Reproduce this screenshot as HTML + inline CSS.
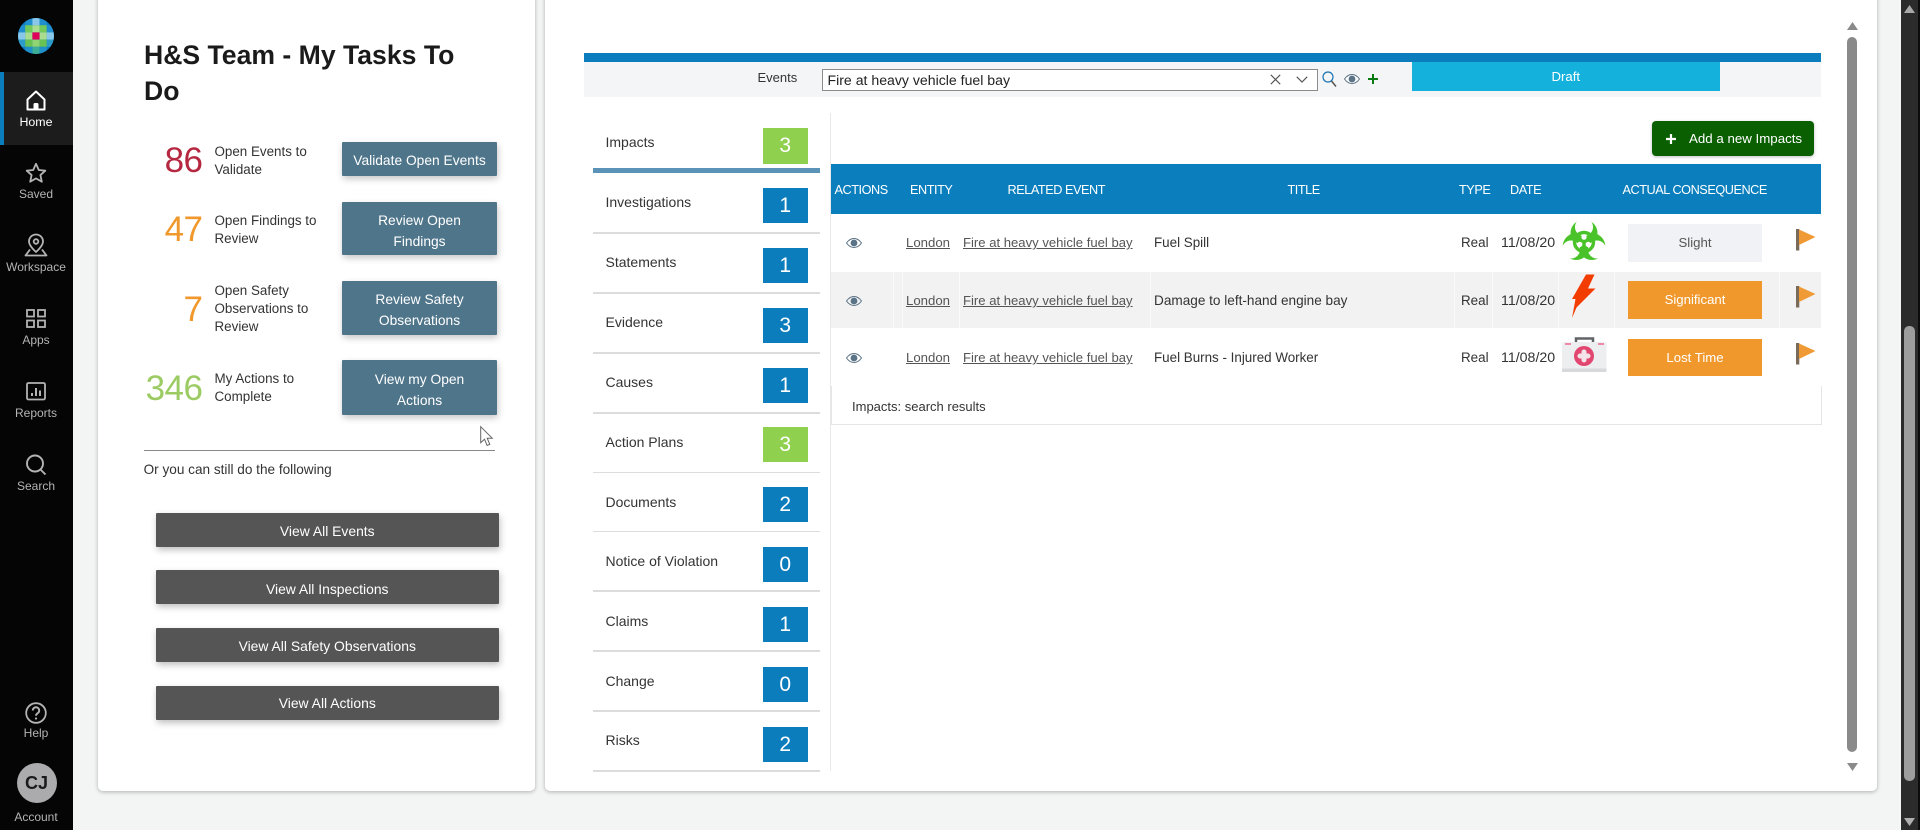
<!DOCTYPE html>
<html><head><meta charset="utf-8"><title>H&amp;S Team</title>
<style>
html,body{margin:0;padding:0}
body{width:1920px;height:830px;overflow:hidden;background:#f3f4f4;position:relative;font-family:"Liberation Sans",sans-serif;color:#2a2a2a}
.a{position:absolute}
.t{position:absolute;white-space:nowrap}
.card{position:absolute;background:#fff;border-radius:0 0 5px 5px;box-shadow:0 1px 4px rgba(0,0,0,.28)}
.nl{position:absolute;left:0;width:72px;text-align:center;font-size:12px;line-height:16px;color:#b4b4b4}
svg{position:absolute;overflow:visible}
.num{position:absolute;left:100px;width:102.5px;text-align:right;font-size:35px;line-height:40px;letter-spacing:-.5px}
.lab{position:absolute;left:214.5px;font-size:13.4px;line-height:18px;color:#333;white-space:nowrap;margin-top:.5px}
.bb{position:absolute;left:342px;width:155px;background:#4f758b;color:#fff;font-size:13.8px;line-height:21px;text-align:center;box-shadow:1px 3px 7px rgba(0,0,0,.22);border-radius:1px}
.gb{position:absolute;left:155.5px;width:343.5px;height:34px;background:#555;color:#fff;font-size:13.9px;line-height:37px;text-align:center;box-shadow:1px 3px 7px rgba(0,0,0,.25);border-radius:1px}
.badge{position:absolute;left:762.5px;width:45.5px;height:35px;background:#0b7dbc;color:#fff;font-size:21px;line-height:35px;text-align:center}
.g{background:#90d04f}
.nv{position:absolute;left:605.5px;font-size:14px;line-height:18px;color:#333;white-space:nowrap;margin-top:-.8px}
.sep{position:absolute;left:593px;width:227px;height:1.5px;background:#dcdcdc}
.th{position:absolute;top:180px;font-size:12.7px;line-height:20px;color:#fff;white-space:nowrap;letter-spacing:-.45px}
.td{position:absolute;font-size:13.4px;line-height:18px;color:#333;white-space:nowrap}
.u{text-decoration:underline;color:#555;font-size:13.2px}
.dt{font-size:14.2px}
.cq{position:absolute;left:1628px;width:134px;height:38px;line-height:38px;text-align:center;font-size:13.2px;color:#fff;background:#f0982c}
.wl{position:absolute;top:272px;width:1px;height:56px;background:#fafafa}
</style></head><body>

<!-- sidebar -->
<div class="a" style="left:0;top:0;width:72.5px;height:830px;background:#050505"></div>
<div class="a" style="left:0;top:72px;width:72.5px;height:73px;background:#1c1c1c"></div>
<div class="a" style="left:0;top:72px;width:4px;height:73px;background:#0b7dbc"></div>

<svg style="left:18px;top:18px" width="36" height="36" viewBox="0 0 36 36">
<defs><clipPath id="lc"><circle cx="18" cy="18" r="18"/></clipPath></defs>
<g clip-path="url(#lc)">
<rect width="36" height="36" fill="#0b7dc4"/>
<rect x="7.2" y="0" width="7.2" height="7.2" fill="#1f8fd0"/><rect x="14.4" y="0" width="7.2" height="7.2" fill="#8ac8ea"/><rect x="21.6" y="0" width="7.2" height="7.2" fill="#1f8fd0"/>
<rect x="0" y="7.2" width="7.2" height="7.2" fill="#1f8fd0"/><rect x="7.2" y="7.2" width="7.2" height="7.2" fill="#72ca5c"/><rect x="14.4" y="7.2" width="7.2" height="7.2" fill="#aadd90"/><rect x="21.6" y="7.2" width="7.2" height="7.2" fill="#72ca5c"/><rect x="28.8" y="7.2" width="7.2" height="7.2" fill="#1f8fd0"/>
<rect x="0" y="14.4" width="7.2" height="7.2" fill="#8ac8ea"/><rect x="7.2" y="14.4" width="7.2" height="7.2" fill="#aadd90"/><rect x="14.4" y="14.4" width="7.2" height="7.2" fill="#e0005a"/><rect x="21.6" y="14.4" width="7.2" height="7.2" fill="#aadd90"/><rect x="28.8" y="14.4" width="7.2" height="7.2" fill="#8ac8ea"/>
<rect x="0" y="21.6" width="7.2" height="7.2" fill="#2d9cc8"/><rect x="7.2" y="21.6" width="7.2" height="7.2" fill="#68c254"/><rect x="14.4" y="21.6" width="7.2" height="7.2" fill="#90d474"/><rect x="21.6" y="21.6" width="7.2" height="7.2" fill="#68c254"/><rect x="28.8" y="21.6" width="7.2" height="7.2" fill="#2d9cc8"/>
<rect x="7.2" y="28.8" width="7.2" height="7.2" fill="#1f90c8"/><rect x="14.4" y="28.8" width="7.2" height="7.2" fill="#3cae98"/><rect x="21.6" y="28.8" width="7.2" height="7.2" fill="#1f90c8"/>
</g></svg>

<svg style="left:26px;top:90px" width="20" height="21" viewBox="0 0 20 21" fill="none" stroke="#fff" stroke-width="2" stroke-linejoin="round"><path d="M1.5 9.5 10 1.5l8.5 8V19.5h-17z"/><rect x="7.5" y="13" width="5" height="6.5" rx="1.5" fill="#fff" stroke="none"/></svg>
<div class="nl" style="top:114px;color:#fff;font-size:12.4px">Home</div>

<svg style="left:25px;top:162px" width="22" height="22" viewBox="0 0 22 22" fill="none" stroke="#b4b4b4" stroke-width="1.8" stroke-linejoin="round"><path d="M11 1.8l2.8 6.2 6.5.7-4.9 4.4 1.4 6.6L11 16.4l-5.800 3.300 1.400-6.600L1.700 8.700l6.500-.7z"/></svg>
<div class="nl" style="top:186px">Saved</div>

<svg style="left:24px;top:233px" width="24" height="24" viewBox="0 0 24 24" fill="none" stroke="#b4b4b4" stroke-width="1.8"><path d="M12 1.5a7 7 0 0 0-7 7c0 4.5 7 10.500 7 10.500s7-6 7-10.500a7 7 0 0 0-7-7z"/><circle cx="12" cy="8.5" r="2.3"/><path d="M6 16.500 1.500 22.500h21L18 16.500" stroke-linejoin="round"/></svg>
<div class="nl" style="top:259px">Workspace</div>

<svg style="left:26px;top:309px" width="20" height="19" viewBox="0 0 20 19" fill="none" stroke="#b4b4b4" stroke-width="1.8"><rect x="1" y="1" width="7" height="6.5"/><rect x="12" y="1" width="7" height="6.5"/><rect x="1" y="11.5" width="7" height="6.5"/><rect x="12" y="11.5" width="7" height="6.5"/></svg>
<div class="nl" style="top:332px">Apps</div>

<svg style="left:26px;top:382px" width="20" height="18" viewBox="0 0 20 18" fill="none" stroke="#b4b4b4" stroke-width="1.8"><rect x="1" y="1" width="18" height="16.5" rx="1.5"/><path d="M6 14v-3M10 14V6M14 14V8.500" stroke-width="2"/></svg>
<div class="nl" style="top:405px">Reports</div>

<svg style="left:25px;top:454px" width="22" height="21" viewBox="0 0 22 21" fill="none" stroke="#b4b4b4" stroke-width="1.9"><circle cx="10" cy="9.5" r="8"/><path d="M15.500 15.500l5 5"/></svg>
<div class="nl" style="top:478px">Search</div>

<svg style="left:25px;top:702px" width="22" height="22" viewBox="0 0 22 22" fill="none" stroke="#b4b4b4" stroke-width="1.8"><circle cx="11" cy="11" r="9.8"/><path d="M7.800 8.500a3.200 3.200 0 1 1 4.900 2.700c-1.100.7-1.700 1.200-1.700 2.600" stroke-width="1.9"/><circle cx="11" cy="16.5" r="1.1" fill="#b4b4b4" stroke="none"/></svg>
<div class="nl" style="top:725px">Help</div>

<div class="a" style="left:16.5px;top:763px;width:40px;height:40px;border-radius:50%;background:#ababad;color:#1a1a1a;font-size:18px;font-weight:bold;line-height:40px;text-align:center">CJ</div>
<div class="nl" style="top:809px">Account</div>

<!-- left card -->
<div class="card" style="left:98px;top:-6px;width:437px;height:797px"></div>
<div class="t" style="left:144px;top:36.5px;font-size:26.6px;line-height:36px;font-weight:bold;color:#1a1a1a;white-space:normal;width:340px">H&amp;S Team - My Tasks To Do</div>

<div class="num" style="top:141px;color:#b5273f">86</div>
<div class="lab" style="top:142px">Open Events to<br>Validate</div>
<div class="bb" style="top:142px;height:34px;line-height:38px">Validate Open Events</div>

<div class="num" style="top:210px;color:#f0982c">47</div>
<div class="lab" style="top:211.5px">Open Findings to<br>Review</div>
<div class="bb" style="top:202px;height:53px"><div style="margin-top:8px">Review Open<br>Findings</div></div>

<div class="num" style="top:290px;color:#f0982c">7</div>
<div class="lab" style="top:281.5px">Open Safety<br>Observations to<br>Review</div>
<div class="bb" style="top:281px;height:54px"><div style="margin-top:8px">Review Safety<br>Observations</div></div>

<div class="num" style="top:369px;color:#9ccb63">346</div>
<div class="lab" style="top:369.5px">My Actions to<br>Complete</div>
<div class="bb" style="top:360px;height:55px"><div style="margin-top:9px">View my Open<br>Actions</div></div>

<svg style="left:480px;top:426px" width="14" height="21" viewBox="0 0 14 21"><path d="M.7.7v16l3.8-3.500 2.600 6.300 2.700-1.100-2.600-6.200h5z" fill="#fff" stroke="#666" stroke-width="1"/></svg>

<div class="a" style="left:144px;top:449.5px;width:351px;height:1px;background:#888"></div>
<div class="t" style="left:143.6px;top:461px;font-size:13.6px;line-height:18px;color:#333">Or you can still do the following</div>

<div class="gb" style="top:513px">View All Events</div>
<div class="gb" style="top:570px;line-height:38px">View All Inspections</div>
<div class="gb" style="top:628px">View All Safety Observations</div>
<div class="gb" style="top:685.5px;line-height:35px">View All Actions</div>

<!-- right card -->
<div class="card" style="left:545px;top:-6px;width:1332px;height:797px"></div>

<div class="a" style="left:584px;top:62px;width:1236.5px;height:35px;background:#f4f5f6"></div>
<div class="a" style="left:584px;top:52.5px;width:1236.5px;height:9.5px;background:#0b7dbc"></div>
<div class="t" style="left:757.5px;top:69px;font-size:13px;line-height:18px;color:#333">Events</div>
<div class="a" style="left:821.5px;top:68.5px;width:494px;height:20.5px;background:#fff;border:1px solid #8c8c8c"></div>
<div class="t" style="left:827.5px;top:71px;font-size:14.1px;line-height:18px;color:#222">Fire at heavy vehicle fuel bay</div>
<svg style="left:1270px;top:74px" width="11" height="11" viewBox="0 0 11 11" fill="none" stroke="#555" stroke-width="1.1"><path d="M.8.8l9.4 9.4M10.2.8.8 10.2"/></svg>
<svg style="left:1296px;top:76px" width="12" height="7" viewBox="0 0 12 7" fill="none" stroke="#555" stroke-width="1.2"><path d="M.8.8 6 6l5.2-5.2"/></svg>
<svg style="left:1322px;top:71px" width="15" height="16" viewBox="0 0 15 16" fill="none" stroke="#1c74b4" stroke-width="1.2"><circle cx="6" cy="6" r="5"/><path d="M9.5 10l4.5 5.500" stroke="#555" stroke-width="1.5"/></svg>
<svg style="left:1343.5px;top:74px" width="16" height="10" viewBox="0 0 16 10"><path d="M.5 5C3 1.5 5.5.5 8 .5s5 1 7.500 4.500C13 8.500 10.500 9.500 8 9.500S3 8.500.5 5z" fill="#fff" stroke="#5b7386" stroke-width="1"/><circle cx="8" cy="5" r="3.4" fill="#5b7386"/></svg>
<svg style="left:1367.5px;top:74px" width="10" height="10" viewBox="0 0 10 10"><path d="M5 0v10M0 5h10" stroke="#0a7a12" stroke-width="2"/></svg>
<div class="a" style="left:1411.5px;top:62px;width:308.5px;height:28.5px;background:#15b1dd;color:#fff;font-size:13.2px;line-height:30px;text-align:center">Draft</div>

<!-- nav list -->
<div class="a" style="left:830px;top:113px;width:1px;height:658px;background:#e8e8e8"></div>
<div class="nv" style="top:134px">Impacts</div><div class="badge g" style="top:128px;height:36px;line-height:36px">3</div>
<div class="a" style="left:593px;top:168px;width:227px;height:5px;background:#5b93b8"></div>
<div class="nv" style="top:194px">Investigations</div><div class="badge" style="top:188px">1</div><div class="sep" style="top:232px"></div>
<div class="nv" style="top:254px">Statements</div><div class="badge" style="top:247.5px">1</div><div class="sep" style="top:292px"></div>
<div class="nv" style="top:314px">Evidence</div><div class="badge" style="top:307.5px">3</div><div class="sep" style="top:352px"></div>
<div class="nv" style="top:374px">Causes</div><div class="badge" style="top:367.5px">1</div><div class="sep" style="top:412px"></div>
<div class="nv" style="top:433.5px">Action Plans</div><div class="badge g" style="top:427.3px">3</div><div class="sep" style="top:471.5px"></div>
<div class="nv" style="top:493.5px">Documents</div><div class="badge" style="top:487px">2</div><div class="sep" style="top:530.5px"></div>
<div class="nv" style="top:552.5px">Notice of Violation</div><div class="badge" style="top:547px">0</div><div class="sep" style="top:590px"></div>
<div class="nv" style="top:612.5px">Claims</div><div class="badge" style="top:607px">1</div><div class="sep" style="top:650px"></div>
<div class="nv" style="top:672.5px">Change</div><div class="badge" style="top:667px">0</div><div class="sep" style="top:710px"></div>
<div class="nv" style="top:732px">Risks</div><div class="badge" style="top:727px">2</div><div class="sep" style="top:770px"></div>

<!-- add button -->
<div class="a" style="left:1652px;top:121px;width:162px;height:34.5px;background:#0a6000;border-radius:4px;box-shadow:0 1px 3px rgba(0,0,0,.25)"></div>
<svg style="left:1666px;top:134px" width="10" height="10" viewBox="0 0 10 10"><path d="M5 0v10M0 5h10" stroke="#fff" stroke-width="2.2"/></svg>
<div class="t" style="left:1689px;top:130px;font-size:13.3px;line-height:18px;color:#fff">Add a new Impacts</div>

<!-- table -->
<div class="a" style="left:831px;top:164px;width:990px;height:50px;background:#0b7fbd"></div>
<div class="th" style="left:834.5px">ACTIONS</div>
<div class="th" style="left:910px">ENTITY</div>
<div class="th" style="left:1007.5px">RELATED EVENT</div>
<div class="th" style="left:1287.5px">TITLE</div>
<div class="th" style="left:1459px">TYPE</div>
<div class="th" style="left:1510px">DATE</div>
<div class="th" style="left:1622.5px">ACTUAL CONSEQUENCE</div>

<div class="a" style="left:831px;top:272px;width:990px;height:56px;background:#f2f2f2"></div>
<div class="wl" style="left:893px"></div><div class="wl" style="left:902px"></div><div class="wl" style="left:959px"></div><div class="wl" style="left:1150px"></div><div class="wl" style="left:1454px"></div><div class="wl" style="left:1492px"></div><div class="wl" style="left:1558px"></div><div class="wl" style="left:1613.5px"></div><div class="wl" style="left:1779px"></div>

<div class="a" style="left:830.5px;top:386px;width:989px;height:38px;border:1px solid #e6e6e6;border-top:0"></div>

<svg style="left:846px;top:238px" width="16" height="10" viewBox="0 0 16 10"><path d="M.5 5C3 1.5 5.5.5 8 .5s5 1 7.500 4.500C13 8.500 10.500 9.500 8 9.500S3 8.500.5 5z" fill="#fff" stroke="#5b7386" stroke-width="1"/><circle cx="8" cy="5" r="3.4" fill="#5b7386"/></svg>
<svg style="left:846px;top:296px" width="16" height="10" viewBox="0 0 16 10"><path d="M.5 5C3 1.5 5.5.5 8 .5s5 1 7.500 4.500C13 8.500 10.500 9.500 8 9.500S3 8.500.5 5z" fill="#f2f2f2" stroke="#5b7386" stroke-width="1"/><circle cx="8" cy="5" r="3.4" fill="#5b7386"/></svg>
<svg style="left:846px;top:353px" width="16" height="10" viewBox="0 0 16 10"><path d="M.5 5C3 1.5 5.5.5 8 .5s5 1 7.500 4.500C13 8.500 10.500 9.500 8 9.500S3 8.500.5 5z" fill="#fff" stroke="#5b7386" stroke-width="1"/><circle cx="8" cy="5" r="3.4" fill="#5b7386"/></svg>

<div class="td u" style="left:906px;top:234px">London</div><div class="td u" style="left:963px;top:234px;font-size:13.1px">Fire at heavy vehicle fuel bay</div><div class="td" style="left:1154px;top:234px">Fuel Spill</div><div class="td" style="left:1461px;top:234px">Real</div><div class="td dt" style="left:1501px;top:234px">11/08/20</div>
<div class="td u" style="left:906px;top:292px">London</div><div class="td u" style="left:963px;top:292px;font-size:13.1px">Fire at heavy vehicle fuel bay</div><div class="td" style="left:1154px;top:292px;font-size:13.6px">Damage to left-hand engine bay</div><div class="td" style="left:1461px;top:292px">Real</div><div class="td dt" style="left:1501px;top:292px">11/08/20</div>
<div class="td u" style="left:906px;top:349px">London</div><div class="td u" style="left:963px;top:349px;font-size:13.1px">Fire at heavy vehicle fuel bay</div><div class="td" style="left:1154px;top:349px">Fuel Burns - Injured Worker</div><div class="td" style="left:1461px;top:349px">Real</div><div class="td dt" style="left:1501px;top:349px">11/08/20</div>
<div class="td" style="left:852px;top:397.5px;font-size:13px">Impacts: search results</div>

<!-- biohazard -->
<svg style="left:1560.5px;top:219px" width="46" height="42" viewBox="-23 -23 46 42">
<defs><mask id="bm" maskUnits="userSpaceOnUse" x="-30" y="-30" width="60" height="60"><rect x="-30" y="-30" width="60" height="60" fill="#000"/>
<circle cx="0" cy="-9" r="13.5" fill="#fff"/>
<circle cx="7.8" cy="4.5" r="13.5" fill="#fff"/>
<circle cx="-7.8" cy="4.5" r="13.5" fill="#fff"/>
<circle cx="0" cy="-15" r="9" fill="#000"/>
<circle cx="13" cy="7.5" r="9" fill="#000"/>
<circle cx="-13" cy="7.5" r="9" fill="#000"/>
<circle cx="0" cy="-4.8" r="2.6" fill="#000"/>
<circle cx="4.2" cy="2.4" r="2.6" fill="#000"/>
<circle cx="-4.2" cy="2.4" r="2.6" fill="#000"/>
</mask></defs>
<rect x="-30" y="-30" width="60" height="60" fill="#4ac22a" mask="url(#bm)"/>
<circle r="9.5" fill="none" stroke="#4ac22a" stroke-width="3.4"/>
<circle r="1.8" fill="#4ac22a"/>
</svg>
<!-- bolt -->
<svg style="left:1571px;top:274px" width="25" height="44" viewBox="0 0 25 44"><path d="M15 .5h8.5L17 14.500h7.500L5.500 33.500 1 44l3.500-19H1z" fill="#f23c00"/></svg>
<!-- kit -->
<svg style="left:1561.5px;top:337px" width="45" height="36" viewBox="0 0 45 36"><path d="M14 6V1.500h17V6" fill="none" stroke="#606468" stroke-width="2.5"/><rect x="0" y="5" width="44.5" height="30" rx="2" fill="#eceef0"/><rect x="0" y="31.5" width="44.5" height="3.5" fill="#d7d9dc"/><path d="M3 7h6M36 7h6" stroke="#ee8aa8" stroke-width="2"/><circle cx="22" cy="19" r="10" fill="#e2476f"/><path d="M22 15v8M18 19h8" stroke="#f3e5ea" stroke-width="5" stroke-linecap="round"/></svg>

<div class="cq" style="top:224px;background:#f0f2f5;color:#555">Slight</div>
<div class="cq" style="top:281px">Significant</div>
<div class="cq" style="top:339px;height:37px;line-height:37px">Lost Time</div>

<svg style="left:1796px;top:228.5px" width="20" height="22" viewBox="0 0 20 22"><rect width="3.3" height="21.5" fill="#7a6a5a"/><path d="M3 .5 19.5 8 3 16z" fill="#ef9a35"/></svg>
<svg style="left:1796px;top:285.5px" width="20" height="22" viewBox="0 0 20 22"><rect width="3.3" height="21.5" fill="#7a6a5a"/><path d="M3 .5 19.5 8 3 16z" fill="#ef9a35"/></svg>
<svg style="left:1796px;top:343px" width="20" height="22" viewBox="0 0 20 22"><rect width="3.3" height="21.5" fill="#7a6a5a"/><path d="M3 .5 19.5 8 3 16z" fill="#ef9a35"/></svg>

<!-- inner scrollbar -->
<svg style="left:1847px;top:22px" width="11" height="8" viewBox="0 0 11 8"><path d="M5.5 0 11 8H0z" fill="#8a8a8a"/></svg>
<div class="a" style="left:1847.3px;top:37px;width:10px;height:714.5px;border-radius:5px;background:#8a8a8a"></div>
<svg style="left:1847px;top:763px" width="11" height="8" viewBox="0 0 11 8"><path d="M0 0h11L5.500 8z" fill="#8a8a8a"/></svg>

<!-- outer scrollbar -->
<div class="a" style="left:1901px;top:0;width:16.5px;height:830px;background:#2b2b2b"></div>
<div class="a" style="left:1917.5px;top:0;width:2.5px;height:830px;background:#0c0c0c"></div>
<svg style="left:1904px;top:5px" width="11" height="8" viewBox="0 0 11 8"><path d="M5.5 0 11 8H0z" fill="#a8a8a8"/></svg>
<div class="a" style="left:1904px;top:326px;width:10.7px;height:454.5px;border-radius:5px;background:#9d9d9d"></div>
<svg style="left:1904px;top:818px" width="11" height="8" viewBox="0 0 11 8"><path d="M0 0h11L5.500 8z" fill="#b0b0b0"/></svg>

</body></html>
